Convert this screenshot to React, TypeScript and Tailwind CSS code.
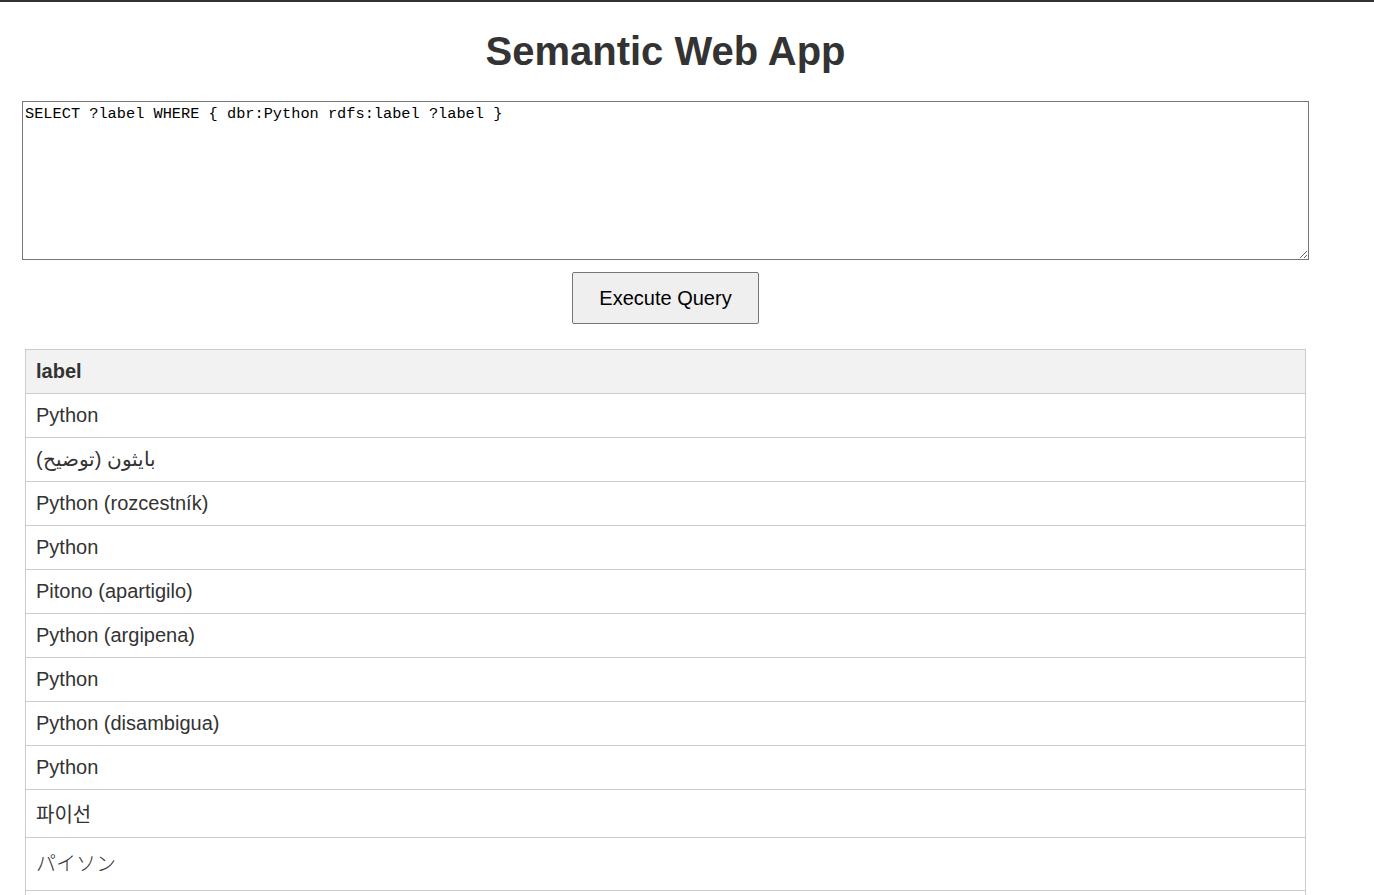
import React from "react";

const rows: { text: string; cls?: string }[] = [
  { text: "Python" },
  { text: "بايثون (توضيح)" },
  { text: "Python (rozcestník)" },
  { text: "Python" },
  { text: "Pitono (apartigilo)" },
  { text: "Python (argipena)" },
  { text: "Python" },
  { text: "Python (disambigua)" },
  { text: "Python" },
  { text: "파이선", cls: "pt-[12px] pb-[8px] leading-[27px] [font-family:'Liberation_Sans','Noto_Sans_CJK_KR',sans-serif]" },
  { text: "パイソン", cls: "py-[10px] leading-[32px] font-light [font-family:'Liberation_Sans','Noto_Sans_CJK_JP',sans-serif]" },
  { text: "Python" },
];

export default function App() {
  return (
    <div className="min-h-screen bg-white border-t-2 border-[#333333] text-[#333333] [font-family:'Liberation_Sans',Arial,sans-serif]">
      <div className="ml-[22px] w-[1287px] flex flex-col items-center">
        <h1 className="mt-[26px] mb-[27px] text-[40px] leading-[46px] font-bold text-[#333333]">
          Semantic Web App
        </h1>
        <textarea
          spellCheck={false}
          defaultValue="SELECT ?label WHERE { dbr:Python rdfs:label ?label }"
          className="block w-[1287px] h-[159px] border border-[#767676] px-[2px] pt-[1px] pb-[2px] text-[15.3px] text-black bg-white [font-family:'Liberation_Mono','DejaVu_Sans_Mono',monospace] resize-y outline-none"
        />
        <button className="mt-[12px] w-[187px] h-[52px] bg-[#efefef] border border-[#767676] rounded-[2px] text-[20px] text-black leading-[23px]">
          Execute Query
        </button>
        <table className="mt-[25px] w-[1281px] border-collapse text-[20px] leading-[23px] text-[#333333]">
          <thead>
            <tr>
              <th className="border border-[#cccccc] bg-[#f2f2f2] px-[10px] py-[10px] text-left font-bold">
                label
              </th>
            </tr>
          </thead>
          <tbody>
            {rows.map((r, i) => (
              <tr key={i}>
                <td className={"border border-[#cccccc] px-[10px] text-left " + (r.cls ?? "py-[10px]")}>
                  {r.text}
                </td>
              </tr>
            ))}
          </tbody>
        </table>
      </div>
    </div>
  );
}
